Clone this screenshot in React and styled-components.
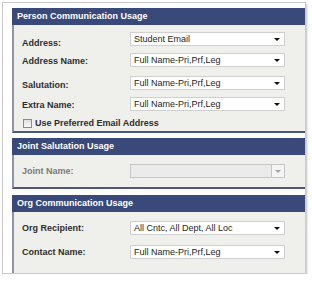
import React from "react";
import styled, { createGlobalStyle } from "styled-components";

const Global = createGlobalStyle`
  html, body { margin: 0; padding: 0; background: #ffffff; }
  body { font-family: "Liberation Sans", Arial, sans-serif; }
`;

const Frame = styled.div`
  margin: 2px 0 0 2px;
  width: 304px;
  height: 272px;
  box-sizing: border-box;
  border: 1px solid #c9c9c9;
  background: #ffffff;
  box-shadow: 1px 2px 2px rgba(0, 0, 0, 0.25);
  padding: 5px 0 0 9px;
  display: flex;
  flex-direction: column;
  overflow: hidden;
`;

const Section = styled.div`
  display: flex;
  flex-direction: column;
  margin-top: ${(p) => p.$mt || 0}px;
  flex: ${(p) => (p.$grow ? 1 : "none")};
`;

const Header = styled.div`
  height: 17px;
  box-sizing: border-box;
  background: #394979;
  color: #ffffff;
  font-size: 9px;
  font-weight: bold;
  line-height: 17px;
  padding-left: 5px;
`;

const Body = styled.div`
  flex: 1;
  background: #efefeb;
  border-left: 2px solid #8e94ae;
  border-bottom: ${(p) => (p.$noBottom ? "none" : "2px solid #4a5784")};
  padding: ${(p) => p.$pad};
  display: flex;
  flex-direction: column;
`;

const Row = styled.div`
  display: grid;
  grid-template-columns: 108px 155px;
  grid-template-rows: 14px;
  align-items: start;
  margin-top: ${(p) => p.$mt || 0}px;
`;

const Label = styled.span`
  font-size: 9px;
  font-weight: bold;
  line-height: 14px;
  padding-top: ${(p) => p.$ly || 0}px;
  color: ${(p) => (p.$disabled ? "#7a7a7a" : "#2e2e2e")};
`;

const Select = styled.div`
  position: relative;
  height: 14px;
  box-sizing: border-box;
  border: 1px solid ${(p) => (p.$disabled ? "#c6c6c6" : "#d0d0d0")};
  background: ${(p) => (p.$disabled ? "#ebebeb" : "#ffffff")};
  font-size: 9px;
  color: #1e1e1e;
  line-height: 12px;
  padding-left: 3px;
  white-space: nowrap;
`;

const Arrow = styled.span`
  position: absolute;
  right: 4px;
  top: 5px;
  width: 0;
  height: 0;
  border-left: 3px solid transparent;
  border-right: 3px solid transparent;
  border-top: 3px solid #111;
`;

const DisabledButton = styled.span`
  position: absolute;
  right: 0;
  top: 0;
  bottom: 0;
  width: 12px;
  border-left: 1px solid #c6c6c6;
  background: #f5f5f5;
  display: flex;
  align-items: center;
  justify-content: center;
  &::after {
    content: "";
    border-left: 3px solid transparent;
    border-right: 3px solid transparent;
    border-top: 3px solid #a0a0a0;
  }
`;

const CheckRow = styled.label`
  display: flex;
  align-items: center;
  gap: 3px;
  height: 12px;
  margin-top: 6px;
  padding-left: 1px;
  font-size: 9px;
  font-weight: bold;
  color: #2e2e2e;
`;

const Box = styled.span`
  width: 9px;
  height: 9px;
  box-sizing: border-box;
  border: 1px solid #8a8a8a;
  background: linear-gradient(#dedede, #fafafa);
`;

function Field({ label, value, mt, ly, disabled }) {
  return (
    <Row $mt={mt}>
      <Label $ly={ly} $disabled={disabled}>
        {label}
      </Label>
      <Select $disabled={disabled}>
        {value}
        {disabled ? <DisabledButton /> : <Arrow />}
      </Select>
    </Row>
  );
}

export default function App() {
  return (
    <>
      <Global />
      <Frame>
        <Section>
          <Header>Person Communication Usage</Header>
          <Body $pad="7px 0 2px 8px">
            <Field label="Address:" value="Student Email" ly={4} />
            <Field label="Address Name:" value="Full Name-Pri,Prf,Leg" mt={7} ly={1} />
            <Field label="Salutation:" value="Full Name-Pri,Prf,Leg" mt={9} ly={2} />
            <Field label="Extra Name:" value="Full Name-Pri,Prf,Leg" mt={7} ly={1} />
            <CheckRow>
              <Box />
              Use Preferred Email Address
            </CheckRow>
          </Body>
        </Section>
        <Section $mt={5}>
          <Header>Joint Salutation Usage</Header>
          <Body $pad="9px 0 9px 8px">
            <Field label="Joint Name:" value="" disabled />
          </Body>
        </Section>
        <Section $mt={6} $grow>
          <Header>Org Communication Usage</Header>
          <Body $noBottom $pad="9px 0 0 8px">
            <Field label="Org Recipient:" value="All Cntc, All Dept, All Loc" />
            <Field label="Contact Name:" value="Full Name-Pri,Prf,Leg" mt={10} />
          </Body>
        </Section>
      </Frame>
    </>
  );
}
